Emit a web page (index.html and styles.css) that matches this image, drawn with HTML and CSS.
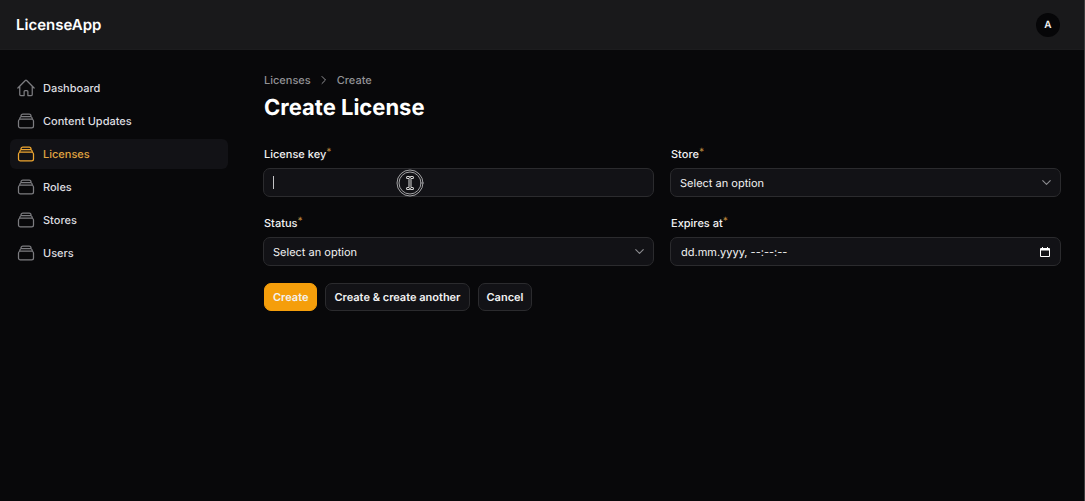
FILE: index.html
```html
<!DOCTYPE html>
<html lang="en">
<head>
<meta charset="utf-8">
<title>Create License - LicenseApp</title>
<link rel="stylesheet" href="styles.css">
</head>
<body>
<svg class="defs" aria-hidden="true">
  <symbol id="stack" viewBox="0 0 24 24"><path d="M6 6.878V6a2.25 2.25 0 0 1 2.25-2.25h7.5A2.25 2.25 0 0 1 18 6v.878m-12 0c.235-.083.487-.128.75-.128h10.5c.263 0 .515.045.75.128m-12 0A2.25 2.25 0 0 0 4.5 9v.878m13.5-3A2.25 2.25 0 0 1 19.5 9v.878m0 0a2.246 2.246 0 0 0-.75-.128H5.25c-.263 0-.515.045-.75.128m15 0A2.25 2.25 0 0 1 21 12v6a2.25 2.25 0 0 1-2.25 2.25H5.25A2.25 2.25 0 0 1 3 18v-6c0-.98.626-1.813 1.5-2.122"/></symbol>
  <symbol id="home" viewBox="0 0 24 24"><path d="m2.25 12 8.954-8.955a1.126 1.126 0 0 1 1.591 0L21.75 12M4.5 9.75v10.125c0 .621.504 1.125 1.125 1.125H9.75v-4.875c0-.621.504-1.125 1.125-1.125h2.25c.621 0 1.125.504 1.125 1.125V21h4.125c.621 0 1.125-.504 1.125-1.125V9.75"/></symbol>
  <symbol id="down" viewBox="0 0 20 20"><path d="m5 7.500 5 5 5-5"/></symbol>
</svg>
<header class="topbar">
  <a class="brand" href="#">LicenseApp</a>
  <button class="avatar" type="button" aria-label="User menu">A</button>
</header>
<div class="layout">
  <nav class="sidebar" aria-label="Main">
    <a class="nav-item" href="#"><svg class="nav-icon"><use href="#home"/></svg>Dashboard</a>
    <a class="nav-item" href="#"><svg class="nav-icon"><use href="#stack"/></svg>Content Updates</a>
    <a class="nav-item active" href="#" aria-current="page"><svg class="nav-icon"><use href="#stack"/></svg>Licenses</a>
    <a class="nav-item" href="#"><svg class="nav-icon"><use href="#stack"/></svg>Roles</a>
    <a class="nav-item" href="#"><svg class="nav-icon"><use href="#stack"/></svg>Stores</a>
    <a class="nav-item" href="#"><svg class="nav-icon"><use href="#stack"/></svg>Users</a>
  </nav>
  <main class="content">
    <nav class="crumbs" aria-label="Breadcrumb">
      <a href="#">Licenses</a>
      <svg class="crumb-arrow" viewBox="0 0 14 14"><path d="m5 3.500 3.500 3.500L5 10.500"/></svg>
      <a href="#">Create</a>
    </nav>
    <h1 class="title">Create License</h1>
    <form>
      <div class="fields">
        <div class="field">
          <label for="key">License key<sup>*</sup></label>
          <div class="control">
            <input id="key" type="text">
            <span class="caret"></span>
            <svg class="pointer" viewBox="0 0 28 28"><circle cx="14" cy="14" r="13"/><circle cx="14" cy="14" r="11"/><path class="beam-edge" d="M11.500 8.500H13L14 9.500L15 8.500H16.500M14 9.500V18.500M11.500 19.500H13L14 18.500L15 19.500H16.500"/><path class="beam" d="M11.500 8.500H13L14 9.500L15 8.500H16.500M14 9.500V18.500M11.500 19.500H13L14 18.500L15 19.500H16.500"/></svg>
          </div>
        </div>
        <div class="field">
          <label for="store">Store<sup>*</sup></label>
          <div class="control">
            <select id="store"><option>Select an option</option></select>
            <svg class="chevron"><use href="#down"/></svg>
          </div>
        </div>
        <div class="field">
          <label for="status">Status<sup>*</sup></label>
          <div class="control">
            <select id="status"><option>Select an option</option></select>
            <svg class="chevron"><use href="#down"/></svg>
          </div>
        </div>
        <div class="field">
          <label for="expires">Expires at<sup>*</sup></label>
          <div class="control">
            <input id="expires" class="date" type="text" value="dd.mm.yyyy, --:--:--">
            <button class="calendar" type="button" aria-label="Open calendar"><svg viewBox="0 0 10 10"><path d="M1 1h1V0h1v1h4V0h1v1h1q1 0 1 1v7q0 1-1 1H1q-1 0-1-1V2q0-1 1-1zM1 3.500V9h8V3.500z" fill-rule="evenodd"/></svg></button>
          </div>
        </div>
      </div>
      <div class="actions">
        <button class="btn primary" type="submit">Create</button>
        <button class="btn" type="button">Create &amp; create another</button>
        <button class="btn" type="button">Cancel</button>
      </div>
    </form>
  </main>
</div>
</body>
</html>
```
FILE: styles.css
```css
* { box-sizing: border-box; }
body {
  margin: 0;
  min-height: 100vh;
  background: #08080a;
  border-right: 1px solid #3c3c3d;
  color: #f2f2f3;
  font: 500 11px/16px Inter, "Liberation Sans", sans-serif;
  text-rendering: geometricPrecision;
}
a { color: inherit; text-decoration: none; }
svg { fill: none; stroke: currentColor; stroke-linecap: round; stroke-linejoin: round; }
button, input, select { font: inherit; color: inherit; text-rendering: inherit; }
.defs { display: none; }

.topbar {
  display: flex;
  align-items: center;
  justify-content: space-between;
  height: 50px;
  padding: 0 24px 0 16px;
  background: #19191b;
  border-bottom: 1px solid #1c1c1e;
}
.brand { font-size: 15px; font-weight: 600; line-height: 24px; color: #fff; }
.avatar {
  width: 24px;
  height: 24px;
  padding: 0;
  border: 0;
  border-radius: 50%;
  background: #060608;
  font-size: 10px;
  font-weight: 600;
}

.layout { display: grid; grid-template-columns: 238px 1fr; }
.sidebar {
  display: flex;
  flex-direction: column;
  gap: 3px;
  padding: 23px 10px;
}
.nav-item {
  display: flex;
  align-items: center;
  gap: 7px;
  height: 30px;
  padding: 0 6px;
  border-radius: 6px;
  color: #dedee0;
}
.nav-icon { width: 20px; height: 20px; color: #7c7c80; stroke-width: 1.5; }
.active { background: #121216; color: #e0a541; }
.active .nav-icon { color: #f0a730; }

.content { padding: 22px 23px 22px 25px; }
.crumbs { display: flex; align-items: center; gap: 6px; color: #929296; padding-left: 1px; }
.crumb-arrow { width: 14px; height: 14px; stroke-width: 1; }
.title {
  margin: 6px 0 0 1px;
  font-size: 22px;
  font-weight: 700;
  line-height: 28px;
  color: #fff;
}

.fields {
  display: grid;
  grid-template-columns: 1fr 1fr;
  gap: 18px 16px;
  margin-top: 24px;
}
.field { display: flex; flex-direction: column; gap: 5px; }
.field label { padding-left: 1px; line-height: 17px; }
.field sup { color: #b8843c; font-size: 10px; line-height: 0; vertical-align: 3px; }
.control { position: relative; display: flex; }
.control input, .control select {
  width: 100%;
  height: 29px;
  padding: 0 9px;
  border: 1px solid #2b2b2e;
  border-radius: 7px;
  background: #121216;
  font-weight: 400;
  outline: 0;
  appearance: none;
}
.control .date { padding-left: 10px; }
.chevron {
  position: absolute;
  right: 7px;
  top: 7px;
  width: 15px;
  height: 15px;
  color: #8b8b8f;
  stroke-width: 1.5;
  pointer-events: none;
}
.caret {
  position: absolute;
  left: 10px;
  top: 8px;
  width: 1px;
  height: 13px;
  background: #c4c4c6;
}
.pointer {
  position: absolute;
  left: 133px;
  top: 1px;
  width: 28px;
  height: 28px;
  color: #a2a2a4;
  stroke-width: 1;
}
.beam-edge { stroke: #d8d8d8; stroke-width: 3; }
.beam { stroke: #161618; stroke-width: 1; }
.calendar {
  position: absolute;
  right: 11px;
  top: 10px;
  display: flex;
  padding: 0;
  border: 0;
  background: none;
}
.calendar svg { width: 10px; height: 10px; fill: #fff; stroke: none; }

.actions { display: flex; gap: 8px; margin-top: 17px; padding-left: 1px; }
.btn {
  height: 28px;
  padding: 0 8px;
  border: 1px solid #2b2b2e;
  border-radius: 7px;
  background: #121216;
  font-weight: 600;
}
.primary { background: #f59e0b; border-color: #f59e0b; }
```
